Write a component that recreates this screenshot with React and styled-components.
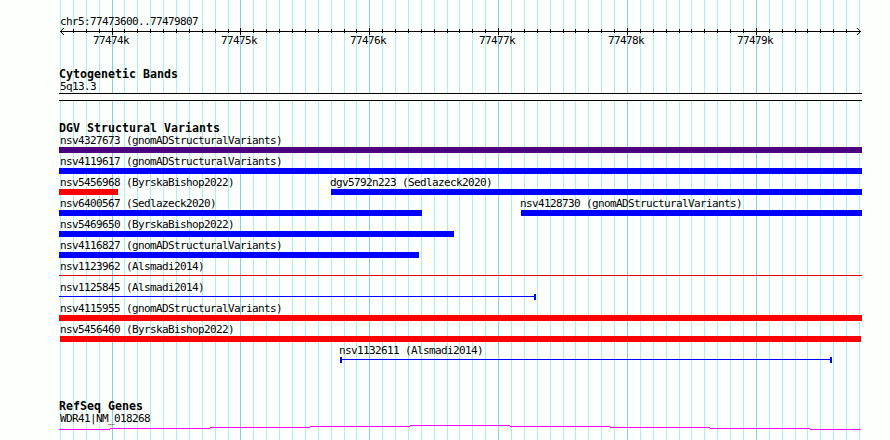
import React from "react";
import styled, { createGlobalStyle } from "styled-components";

const GlobalStyle = createGlobalStyle`
    body {
        margin: 0;
        background-color: #fdfffc;
        overflow: hidden;
    }
`

const START = 77473600;
const END = 77479807;
const LEFT = 60;
const SCALE = 800 / (END - START + 1);

const ticks = [];
for (let pos = START; pos <= END; pos += 100) {
    ticks.push({
        pos,
        x: Math.floor(LEFT + (pos - START) * SCALE + 0.5),
        major: pos % 1000 === 0
    });
}

// from / to are pixels on the panel
const lanes = [
    [{ name: "nsv4327673 (gnomADStructuralVariants)", from: 59, to: 862, color: "#4b0082" }],
    [{ name: "nsv4119617 (gnomADStructuralVariants)", from: 59, to: 862, color: "#0000ff" }],
    [
        { name: "nsv5456968 (ByrskaBishop2022)", from: 59, to: 118, color: "#ff0000" },
        { name: "dgv5792n223 (Sedlazeck2020)", from: 331, to: 862, color: "#0000ff", shift: -1 }
    ],
    [
        { name: "nsv6400567 (Sedlazeck2020)", from: 59, to: 422, color: "#0000ff" },
        { name: "nsv4128730 (gnomADStructuralVariants)", from: 521, to: 862, color: "#0000ff", shift: -1 }
    ],
    [{ name: "nsv5469650 (ByrskaBishop2022)", from: 59, to: 454, color: "#0000ff" }],
    [{ name: "nsv4116827 (gnomADStructuralVariants)", from: 59, to: 419, color: "#0000ff" }],
    [{ name: "nsv1123962 (Alsmadi2014)", from: 59, to: 862, color: "#e00010", thin: true }],
    [{ name: "nsv1125845 (Alsmadi2014)", from: 59, to: 536, color: "#0000ff", thin: true, capRight: true }],
    [{ name: "nsv4115955 (gnomADStructuralVariants)", from: 59, to: 862, color: "#ff0000" }],
    [{ name: "nsv5456460 (ByrskaBishop2022)", from: 60, to: 861, color: "#ff0000", shift: 0 }],
    [{ name: "nsv1132611 (Alsmadi2014)", from: 340, to: 832, color: "#0000ff", thin: true, capLeft: true, capRight: true, shift: -1 }]
];

const GridLines = () => (
    <GridSvg width="890" height="440" shapeRendering="crispEdges">
        {ticks.map(tick =>
            <rect key={tick.pos} x={tick.x} y="0" width="1" height="440" fill={tick.major ? "#87ceeb" : "#afeeee"} />
        )}
    </GridSvg>
)

const Axis = () => (
    <AxisSvg width="890" height="9" shapeRendering="crispEdges">
        <rect x="60" y="4" width="801" height="1" />
        {ticks.map(tick =>
            tick.x > 60 && tick.x < 859
                ? <rect key={tick.pos} x={tick.x} y={tick.major ? 1 : 2} width="1" height={tick.major ? 7 : 4} />
                : null
        )}
        <path d="M61 3h1v1h-1zM62 2h1v1h-1zM63 1h1v1h-1zM61 5h1v1h-1zM62 6h1v1h-1zM63 7h1v1h-1z" />
        <path d="M859 3h1v1h-1zM858 2h1v1h-1zM857 1h1v1h-1zM859 5h1v1h-1zM858 6h1v1h-1zM857 7h1v1h-1z" />
    </AxisSvg>
)

const Variant = ({ variant, gap }) => (
    <Feature $gap={gap} $width={variant.to - variant.from}>
        <Label $shift={variant.shift === undefined ? 1 : variant.shift}>{variant.name}</Label>
        {variant.thin
            ? <Span $color={variant.color} $capLeft={variant.capLeft} $capRight={variant.capRight} />
            : <Bar $color={variant.color} />}
    </Feature>
)

const geneSteps = [
    [59, 110, 4], [110, 210, 3], [210, 310, 2], [310, 410, 1], [410, 510, 0],
    [510, 610, 1], [610, 710, 2], [710, 810, 3], [810, 861, 4]
];

const App = () => {
    return (
        <Panel>
            <GlobalStyle />
            <GridLines />
            <Ruler>
                <Label $shift={60}>chr5:77473600..77479807</Label>
                <Axis />
                <TickLabels>
                    {ticks.filter(tick => tick.major).map((tick, index, majors) =>
                        <TickLabel key={tick.pos} $gap={index ? tick.x - majors[index - 1].x - 36 : tick.x - 19}>
                            {tick.pos / 1000}k
                        </TickLabel>
                    )}
                </TickLabels>
            </Ruler>

            <Track $space={20}>
                <Title>Cytogenetic Bands</Title>
                <Label $shift={60}>5q13.3</Label>
                <Band />
            </Track>

            <Track $space={20}>
                <Title>DGV Structural Variants</Title>
                {lanes.map((lane, index) =>
                    <Lane key={index}>
                        {lane.map((variant, i) =>
                            <Variant key={variant.name} variant={variant} gap={variant.from - (i ? lane[i - 1].to : 0)} />
                        )}
                    </Lane>
                )}
            </Track>

            <Track $space={34}>
                <Title>RefSeq Genes</Title>
                <Label $shift={60}>WDR41|NM_018268</Label>
                <GeneSvg width="890" height="5" shapeRendering="crispEdges">
                    {geneSteps.map(([from, to, y]) =>
                        <rect key={from} x={from} y={y} width={to - from} height="1" fill="#ff00ff" />
                    )}
                </GeneSvg>
            </Track>
        </Panel>
    )
}

export default App;

const Panel = styled.div`
    position: relative;
    width: 890px;
    height: 440px;
    overflow: hidden;
    background-color: #fdfffc;
    color: #000;
    font-family: "DejaVu Sans Mono", "Liberation Mono", monospace;
    font-size: 11px;
    line-height: 13px;
`

const GridSvg = styled.svg`
    position: absolute;
    top: 0;
    left: 0;
`

const Ruler = styled.div`
    position: relative;
    padding-top: 15px;
`

const AxisSvg = styled.svg`
    display: block;
    margin-top: -1px;
`

const TickLabels = styled.div`
    display: flex;
    margin-top: -2px;
`

const TickLabel = styled.div`
    width: 36px;
    margin-left: ${props => props.$gap}px;
    letter-spacing: -0.622px;
    white-space: nowrap;
`

const Track = styled.section`
    position: relative;
    padding-top: ${props => props.$space}px;
`

const Title = styled.div`
    height: 13px;
    padding-left: 59px;
    font-size: 11.6px;
    font-weight: bold;
    line-height: 15px;
    letter-spacing: 0.017px;
    white-space: nowrap;
`

const Label = styled.div`
    height: 13px;
    text-indent: ${props => props.$shift}px;
    letter-spacing: -0.622px;
    white-space: nowrap;
`

const Band = styled.div`
    height: 6px;
    width: 803px;
    margin: 0 0 0 59px;
    border-top: 1px solid #000;
    border-bottom: 1px solid #000;
    background-color: #fdfffc;
`

const Lane = styled.div`
    display: flex;
    height: 21px;
`

const Feature = styled.div`
    flex: none;
    width: ${props => props.$width}px;
    margin-left: ${props => props.$gap}px;
`

const Bar = styled.div`
    height: 6px;
    background-color: ${props => props.$color};
`

const Span = styled.div`
    box-sizing: border-box;
    height: 6px;
    border: 0 solid ${props => props.$color};
    border-left-width: ${props => props.$capLeft ? 2 : 0}px;
    border-right-width: ${props => props.$capRight ? 2 : 0}px;
    background: linear-gradient(${props => props.$color}, ${props => props.$color}) 0 2px / 100% 1px no-repeat;
`

const GeneSvg = styled.svg`
    display: block;
`
